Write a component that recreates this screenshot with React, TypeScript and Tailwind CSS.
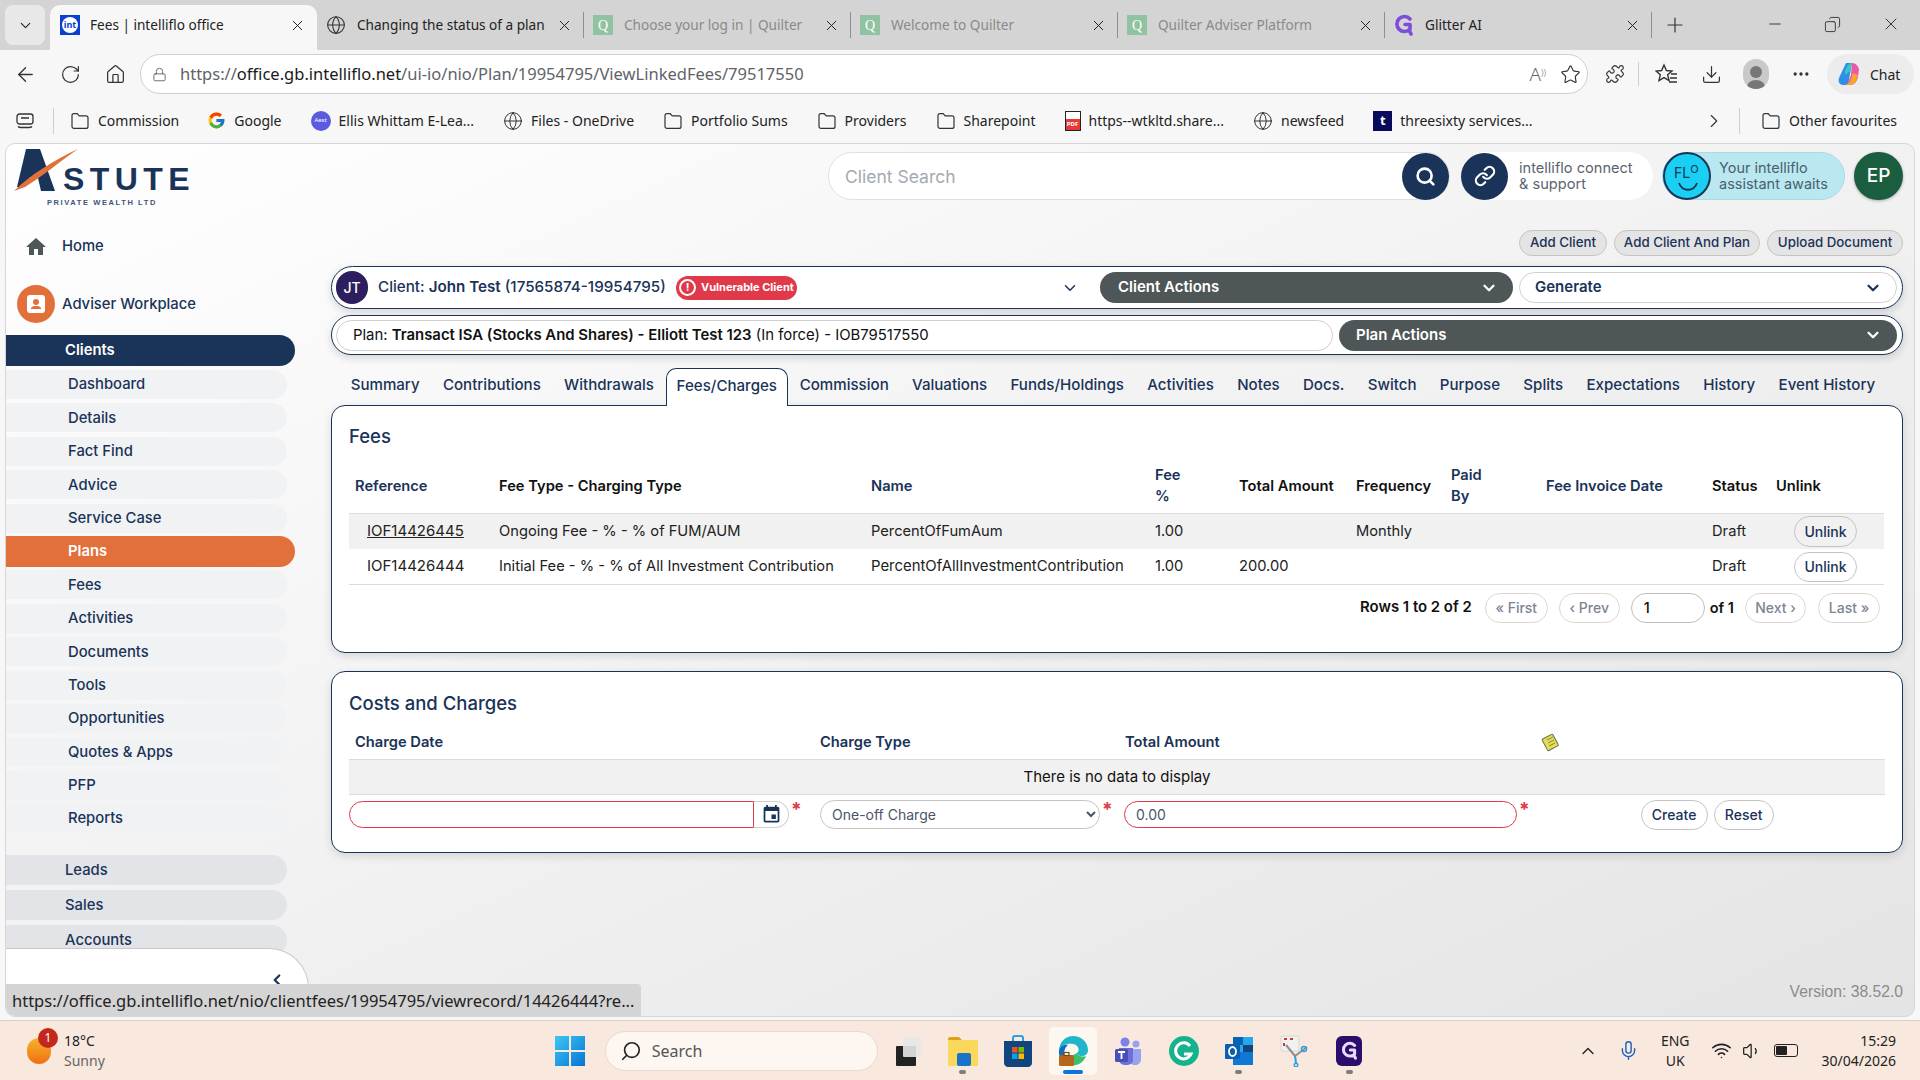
import {
  ArrowLeft,
  ChevronDown,
  ChevronLeft,
  ChevronRight,
  ChevronUp,
  Copy,
  Download,
  Globe,
  House,
  Link,
  Lock,
  Mic,
  Minus,
  MoreHorizontal,
  Plus,
  Puzzle,
  RotateCw,
  Search,
  Star,
  Volume1,
  Wifi,
  X,
} from "lucide-react";
import { FcGoogle } from "react-icons/fc";

const browserTabs = [
  { title: "Changing the status of a plan", icon: "globe", dim: false },
  { title: "Choose your log in | Quilter", icon: "q", dim: true },
  { title: "Welcome to Quilter", icon: "q", dim: true },
  { title: "Quilter Adviser Platform", icon: "q", dim: true },
  { title: "Glitter AI", icon: "g", dim: false },
];

const menuItems = [
  "Dashboard",
  "Details",
  "Fact Find",
  "Advice",
  "Service Case",
  "Plans",
  "Fees",
  "Activities",
  "Documents",
  "Tools",
  "Opportunities",
  "Quotes & Apps",
  "PFP",
  "Reports",
];

const planTabs = [
  "Summary",
  "Contributions",
  "Withdrawals",
  "Fees/Charges",
  "Commission",
  "Valuations",
  "Funds/Holdings",
  "Activities",
  "Notes",
  "Docs.",
  "Switch",
  "Purpose",
  "Splits",
  "Expectations",
  "History",
  "Event History",
];

function FolderIcon() {
  return (
    <svg width="20" height="20" viewBox="0 0 20 20" fill="none" stroke="#333" strokeWidth="1.2" className="shrink-0">
      <path d="M2 4.5C2 3.4 2.900 2.600 4 2.600h3.200l2 2.200H16c1.100 0 2 .9 2 2v8.600c0 1.100-.9 2-2 2H4c-1.100 0-2-.9-2-2z" />
    </svg>
  );
}

function QuilterIcon() {
  return (
    <span className="flex h-5 w-5 shrink-0 items-center justify-center bg-[#8fc3a2] [font-family:'Liberation_Serif',serif] text-[14px] text-white">
      Q
    </span>
  );
}

function GlitterG({ color, size }: { color: string; size: number }) {
  return (
    <svg width={size} height={size + 2} viewBox="0 0 20 22" className="shrink-0">
      <path
        d="M16 5A7.500 7.500 0 1 0 16 15V10.500H11M15 16l2 4"
        fill="none"
        stroke={color}
        strokeWidth="3.600"
        strokeLinecap="round"
        strokeLinejoin="round"
      />
    </svg>
  );
}

function BrowserTab({ title, icon, dim }: { title: string; icon: string; dim: boolean }) {
  return (
    <div className="flex h-[45px] w-[267px] shrink-0 items-center pb-[5px] pl-[9px]">
      {icon === "globe" && <Globe size={20} strokeWidth={1.3} className="shrink-0 text-[#333]" />}
      {icon === "q" && <QuilterIcon />}
      {icon === "g" && <GlitterG color="#7c4ddb" size={20} />}
      <span className={`ml-[11px] flex-1 truncate text-[13.600px] ${dim ? "text-[#8a8a8a]" : "text-[#222]"}`}>{title}</span>
      <X size={17} strokeWidth={1.4} className="mr-[10px] shrink-0 text-[#222]" />
      <span className="h-[26px] w-px shrink-0 bg-[#8f8f8f]" />
    </div>
  );
}

function TabStrip() {
  return (
    <div className="flex h-[50px] shrink-0 items-end bg-[#d4d4d4] pl-[5px]">
      <div className="mb-[5px] mr-[5px] flex h-[40px] w-[40px] items-center justify-center rounded-[8px] bg-[#e8e8e8]">
        <ChevronDown size={17} strokeWidth={1.5} className="text-[#222]" />
      </div>
      <div className="flex h-[45px] w-[267px] items-center rounded-t-[10px] bg-[#f7f7f7] pb-[5px] pl-[10px] pr-[11px]">
        <span className="flex h-[20px] w-[20px] shrink-0 items-center justify-center bg-[#0a3fd0]">
          <span className="flex h-[16px] w-[16px] items-center justify-center rounded-full bg-white text-[9px] font-bold text-[#0a3fd0]">int</span>
        </span>
        <span className="ml-[10px] flex-1 text-[13.600px] text-[#222]">Fees | intelliflo office</span>
        <X size={17} strokeWidth={1.4} className="text-[#222]" />
      </div>
      {browserTabs.map((t) => (
        <BrowserTab key={t.title} {...t} />
      ))}
      <Plus size={24} strokeWidth={1.2} className="mb-[13px] ml-[11px] text-[#333]" />
      <div className="mb-[16px] ml-auto flex w-[154px] items-center justify-between pr-[19px] text-[#333]">
        <Minus size={18} strokeWidth={1.3} />
        <Copy size={17} strokeWidth={1.3} className="-scale-x-100" />
        <X size={20} strokeWidth={1.2} />
      </div>
    </div>
  );
}

function ToolBar() {
  return (
    <div className="flex h-[48px] shrink-0 items-center bg-[#f7f7f7] pl-[14px] text-[#333]">
      <ArrowLeft size={23} strokeWidth={1.4} />
      <RotateCw size={21} strokeWidth={1.4} className="ml-[23px]" />
      <House size={21} strokeWidth={1.4} className="ml-[24px]" />
      <div className="ml-[14px] flex h-[40px] w-[1448px] items-center rounded-full border border-[#cfcfcf] bg-white pl-[11px] pr-[6px]">
        <Lock size={15} strokeWidth={1.5} className="text-[#666]" />
        <span className="ml-[13px] text-[16.500px] text-[#5f6368]">
          https://<span className="text-[#1a1a1a]">office.gb.intelliflo.net</span>/ui-io/nio/Plan/19954795/ViewLinkedFees/79517550
        </span>
        <span className="ml-auto text-[19px] font-light text-[#666]">
          A<sup className="text-[9px]">))</sup>
        </span>
        <Star size={21} strokeWidth={1.3} className="ml-[14px] text-[#333]" />
      </div>
      <Puzzle size={20} strokeWidth={1.4} className="ml-[17px]" />
      <span className="ml-[13px] h-[24px] w-px bg-[#cfcfcf]" />
      <svg width="24" height="22" viewBox="0 0 24 22" fill="none" stroke="#333" strokeWidth="1.4" className="ml-[16px]">
        <path d="M9 2l2.400 5.500 5.600.5-4.300 3.800 1.300 5.700L9 14.600l-5 2.900 1.300-5.700L1 8l5.600-.5z" />
        <path d="M16 11h6M15 15h7M14 19h8" />
      </svg>
      <Download size={21} strokeWidth={1.4} className="ml-[22px]" />
      <span className="ml-[21px] flex h-[30px] w-[26px] items-end justify-center overflow-hidden rounded-full bg-[#c9c9c9]">
        <svg width="22" height="26" viewBox="0 0 22 26" fill="#777">
          <circle cx="11" cy="9" r="6" />
          <ellipse cx="11" cy="24" rx="9" ry="7" />
        </svg>
      </span>
      <MoreHorizontal size={20} className="ml-[22px]" />
      <div className="ml-[16px] flex h-[40px] w-[87px] items-center rounded-full bg-[#ececec] pl-[10px]">
        <svg width="24" height="26" viewBox="0 0 24 26">
          <path d="M9 2h6l-4 22H6C2 24 1 20 2 17z" fill="#2f8fe8" />
          <path d="M15 2c4 0 6 3 7 6l-1 8c-1 5-4 8-8 8h-3l4-10z" fill="#e85aa8" />
          <path d="M6 24c4 0 7-2 8-6l2-6 5 2-2 6c-1 3-4 4-7 4z" fill="#f4a62a" />
          <path d="M8 10c1-3 3-8 7-8l-2 8-5 4z" fill="#35c7c0" />
        </svg>
        <span className="ml-[9px] text-[14px] text-[#222]">Chat</span>
      </div>
    </div>
  );
}

function Bookmark({ icon, label }: { icon: React.ReactNode; label: string }) {
  return (
    <div className="flex shrink-0 items-center gap-[8px]">
      {icon}
      <span className="text-[14px] text-[#222]">{label}</span>
    </div>
  );
}

function BookmarkBar() {
  const globe = <Globe size={20} strokeWidth={1.2} className="text-[#333]" />;
  return (
    <div className="flex h-[45px] shrink-0 items-center bg-[#f7f7f7] pl-[16px] pr-[23px]">
      <svg width="18" height="18" viewBox="0 0 18 18" fill="none" stroke="#333" strokeWidth="1.3">
        <rect x="1" y="2" width="16" height="10" rx="2.500" />
        <path d="M5 6h8M2 14.500c1 1 2 1 3 1h8c1 0 2 0 3-1" />
      </svg>
      <span className="ml-[19px] mr-[16px] h-[26px] w-px bg-[#cfcfcf]" />
      <div className="flex flex-1 items-center gap-[29px]">
        <Bookmark icon={<FolderIcon />} label="Commission" />
        <div className="-ml-[1px]">
          <Bookmark icon={<FcGoogle size={19} />} label="Google" />
        </div>
        <Bookmark
          icon={
            <span className="flex h-[20px] w-[20px] items-center justify-center rounded-full bg-[#5b5be0] text-[6px] text-white">
              Aest
            </span>
          }
          label="Ellis Whittam E-Lea..."
        />
        <Bookmark icon={globe} label="Files - OneDrive" />
        <Bookmark icon={<FolderIcon />} label="Portfolio Sums" />
        <Bookmark icon={<FolderIcon />} label="Providers" />
        <Bookmark icon={<FolderIcon />} label="Sharepoint" />
        <Bookmark
          icon={
            <span className="flex h-[20px] w-[16px] items-end border border-[#222] bg-white">
              <span className="w-full bg-[#e53935] text-center text-[6px] font-bold leading-[11px] text-white">PDF</span>
            </span>
          }
          label="https--wtkltd.share..."
        />
        <Bookmark icon={globe} label="newsfeed" />
        <Bookmark
          icon={
            <span className="flex h-[20px] w-[19px] items-center justify-center bg-[#0a0a5c] text-[13px] font-bold text-white">t</span>
          }
          label="threesixty services..."
        />
      </div>
      <ChevronRight size={22} strokeWidth={1.2} className="text-[#333]" />
      <span className="ml-[14px] mr-[21px] h-[26px] w-px bg-[#cfcfcf]" />
      <Bookmark icon={<FolderIcon />} label="Other favourites" />
    </div>
  );
}

function AstuteLogo() {
  return (
    <div className="relative h-[62px] w-[190px]">
      <svg width="66" height="46" viewBox="0 0 66 46" className="absolute left-[2px] top-[1px]">
        <path d="M12 0h14l15 42H27L24 29l-8-1-5 10H3z" fill="#1a3358" />
        <path d="M0 42C16 26 40 11 64 0 44 14 26 29 11 38z" fill="#e2703a" />
      </svg>
      <span className="absolute left-[51px] top-[16px] text-[32px] font-bold leading-[30px] tracking-[5.400px] text-[#1a3358] [font-family:'Liberation_Sans',sans-serif]">
        STUTE
      </span>
      <span className="absolute left-[35px] top-[50px] whitespace-nowrap text-[7.500px] font-bold leading-[10px] tracking-[1.600px] text-[#3d5578] [font-family:'Liberation_Sans',sans-serif]">
        PRIVATE WEALTH LTD
      </span>
    </div>
  );
}

function Sidebar() {
  return (
    <aside className="relative flex w-[325px] shrink-0 flex-col overflow-hidden text-[14.800px] font-medium text-[#1a3358]">
      <div className="h-[84px] pl-[6px] pt-[4px]">
        <AstuteLogo />
      </div>
      <div className="flex h-[37px] items-center pl-[18px]">
        <svg width="24" height="24" viewBox="0 0 24 24" fill="#4f5658">
          <path d="M10 20v-6h4v6h5v-8h3L12 3 2 12h3v8z" />
        </svg>
        <span className="ml-[14px]">Home</span>
      </div>
      <div className="mt-[20px] flex h-[38px] items-center pl-[11px]">
        <span className="flex h-[38px] w-[38px] items-center justify-center rounded-full bg-[#e2703a]">
          <svg width="20" height="20" viewBox="0 0 20 20">
            <rect x="1" y="1" width="18" height="18" rx="3" fill="#fff" />
            <circle cx="10" cy="8" r="3" fill="#e2703a" />
            <path d="M4.500 15c1-2.500 3-3 5.500-3s4.500.5 5.500 3z" fill="#e2703a" />
          </svg>
        </span>
        <span className="ml-[7px]">Adviser Workplace</span>
      </div>
      <div className="mt-[12px] flex h-[31px] w-[289px] items-center rounded-r-full bg-[#1a3358] pl-[59px] font-semibold text-white">
        Clients
      </div>
      <div className="mt-[4px] flex flex-col gap-[4.400px]">
        {menuItems.map((m) =>
          m === "Plans" ? (
            <div key={m} className="-my-[1px] flex h-[31px] w-[289px] items-center rounded-r-full bg-[#e2703a] pl-[62px] font-semibold text-white">
              {m}
            </div>
          ) : (
            <div key={m} className="flex h-[29px] w-[281px] items-center rounded-r-full bg-[#f1f2f4] pl-[62px]">
              {m}
            </div>
          ),
        )}
      </div>
      <div className="mt-[22px] flex flex-col gap-[5px]">
        {["Leads", "Sales", "Accounts"].map((m) => (
          <div key={m} className="flex h-[30px] w-[281px] items-center rounded-r-full bg-[#e2e4e8] pl-[59px]">
            {m}
          </div>
        ))}
      </div>
      {/* collapse panel sits over the end of the menu */}
      <div className="absolute bottom-0 left-0 h-[68px] w-[303px] rounded-tr-[40px] border-r border-t border-[#c9c9c9] bg-white">
        <ChevronLeft size={18} strokeWidth={3} className="absolute left-[262px] top-[22px] text-[#1a3358]" />
      </div>
    </aside>
  );
}

function PillButton({ children, className = "" }: { children: React.ReactNode; className?: string }) {
  return (
    <button className={`flex items-center justify-center rounded-full border border-[#c4c4c4] font-medium text-[#1a3358] ${className}`}>
      {children}
    </button>
  );
}

function TopBar() {
  return (
    <div className="flex h-[48px] justify-end">
      <div className="flex w-[622px] items-center rounded-full border border-[#e0e0e0] bg-white pl-[16px]">
        <input
          placeholder="Client Search"
          className="mt-[2px] min-w-0 flex-1 bg-transparent text-[17.500px] outline-none placeholder:text-[#a3a9b3]"
        />
        <span className="ml-[1px] flex h-[47px] w-[47px] shrink-0 items-center justify-center rounded-full bg-[#1a3358]">
          <Search size={21} strokeWidth={3} className="text-white" />
        </span>
      </div>
      <div className="ml-[11px] flex w-[192px] items-center rounded-full bg-white">
        <span className="flex h-[47px] w-[47px] shrink-0 items-center justify-center rounded-full bg-[#1a3358]">
          <Link size={22} strokeWidth={2.4} className="text-white" />
        </span>
        <span className="ml-[11px] text-[14.600px] leading-[16px] text-[#5b6470]">
          intelliflo connect
          <br />& support
        </span>
      </div>
      <div className="ml-[9px] flex w-[183px] items-center rounded-full border border-[#a9dbe4] bg-[#b9e8f1]">
        <span className="relative h-[48px] w-[48px] shrink-0 rounded-full border-2 border-[#1a3358] bg-[#19d0f2] text-[#1a3358]">
          <span className="absolute left-[9px] top-[11px] text-[14px] leading-[16px]">
            FL<sup className="text-[11px]">O</sup>
          </span>
          <svg width="22" height="10" viewBox="0 0 22 10" className="absolute left-[12px] top-[28px]" fill="none" stroke="#1a3358" strokeWidth="1.8">
            <path d="M2 1c3 9 15 9 18 0" />
          </svg>
        </span>
        <span className="ml-[8px] text-[14.500px] leading-[16px] text-[#4a6170]">
          Your intelliflo
          <br />
          assistant awaits
        </span>
      </div>
      <span className="ml-[9px] flex h-[48px] w-[49px] items-center justify-center rounded-full bg-[#1b5e3f] text-[19px] font-medium text-white shadow-[0_1px_3px_rgba(0,0,0,0.3)]">
        EP
      </span>
    </div>
  );
}

function ClientBars() {
  return (
    <>
      <div className="mt-[9px] flex h-[43px] items-center rounded-[22px] border border-[#1a3358] bg-white pl-[4px] pr-[5px] shadow-[0_3px_8px_rgba(0,0,0,0.15)]">
        <span className="flex h-[33px] w-[32px] shrink-0 items-center justify-center rounded-full bg-[#2d1f5e] text-[14px] font-medium text-white">JT</span>
        <span className="ml-[10px] w-[288px] whitespace-nowrap text-[15.200px] font-medium text-[#1a3358]">
          Client: <span className="font-semibold">John Test</span> (17565874-19954795)
        </span>
        <span className="ml-[10px] flex h-[24px] w-[121px] shrink-0 items-center rounded-full bg-[#e0394a] pl-[3px] text-[11px] font-bold text-white">
          <span className="flex h-[17px] w-[17px] items-center justify-center rounded-full border-2 border-white text-[11px] leading-none">!</span>
          <span className="ml-[5px]">Vulnerable Client</span>
        </span>
        <span className="flex flex-1 justify-end pr-[21px]">
          <ChevronDown size={18} strokeWidth={2} className="text-[#1a3358]" />
        </span>
        <div className="flex h-[31px] w-[413px] shrink-0 items-center justify-between rounded-full bg-[#4f5658] pl-[18px] pr-[15px] text-[15px] font-semibold text-white">
          Client Actions
          <ChevronDown size={18} strokeWidth={3} />
        </div>
        <div className="ml-[6px] flex h-[31px] w-[378px] shrink-0 items-center justify-between rounded-full border border-[#cfcfcf] bg-white pl-[15px] pr-[14px] text-[15px] font-semibold text-[#1a3358]">
          Generate
          <ChevronDown size={18} strokeWidth={3} />
        </div>
      </div>
      <div className="mt-[6px] flex h-[40px] items-center rounded-[20px] border border-[#1a3358] bg-white pl-[4px] pr-[5px] shadow-[0_3px_8px_rgba(0,0,0,0.15)]">
        <div className="flex h-[31px] w-[997px] items-center rounded-full border border-[#cfcfcf] pl-[16px] text-[14.900px] text-[#111]">
          Plan:&nbsp;<span className="font-semibold">Transact ISA (Stocks And Shares) - Elliott Test 123</span>&nbsp;(In force) - IOB79517550
        </div>
        <div className="ml-[6px] flex h-[31px] flex-1 items-center justify-between rounded-full bg-[#4f5658] pl-[17px] pr-[15px] text-[15px] font-semibold text-white">
          Plan Actions
          <ChevronDown size={18} strokeWidth={3} />
        </div>
      </div>
    </>
  );
}

function PlanTabs() {
  return (
    <div className="relative z-10 mt-[13px] -mb-px flex h-[38px] pl-[8px] text-[15.100px] font-medium text-[#1a3358]">
      {planTabs.map((t) =>
        t === "Fees/Charges" ? (
          <span key={t} className="flex items-center rounded-t-[10px] border border-b-0 border-[#1a3358] bg-white px-[10px] pb-[3px]">
            {t}
          </span>
        ) : (
          <span key={t} className="flex items-center px-[11.650px] pb-[3px]">
            {t}
          </span>
        ),
      )}
    </div>
  );
}

function FeesCard() {
  const th = "px-[6px] pt-[1px] text-left align-middle text-[14.700px] font-semibold";
  const td = "px-[6px] align-middle text-[14.700px] text-[#222]";
  const pager = "flex h-[30px] items-center justify-center rounded-full border border-[#d8d8d8] text-[14px] font-medium text-[#7b8494]";
  return (
    <div className="h-[248px] rounded-[14px] border border-[#1a3358] bg-white px-[17px] pt-[19px] shadow-[0_3px_10px_rgba(0,0,0,0.12)]">
      <h2 className="mb-[12px] text-[18.500px] font-medium leading-[22px] text-[#1a3358]">Fees</h2>
      <table className="w-[1535px] table-fixed border-collapse">
        <colgroup>
          <col className="w-[144px]" />
          <col className="w-[372px]" />
          <col className="w-[285px]" />
          <col className="w-[83px]" />
          <col className="w-[117px]" />
          <col className="w-[95px]" />
          <col className="w-[95px]" />
          <col className="w-[166px]" />
          <col className="w-[64px]" />
          <col className="w-[114px]" />
        </colgroup>
        <thead>
          <tr className="h-[54px] leading-[21px]">
            <th className={`${th} text-[#1a3358]`}>Reference</th>
            <th className={`${th} text-[#111]`}>Fee Type - Charging Type</th>
            <th className={`${th} text-[#1a3358]`}>Name</th>
            <th className={`${th} pl-[5px] font-medium text-[#1a3358]`}>
              Fee
              <br />%
            </th>
            <th className={`${th} text-[#111]`}>Total Amount</th>
            <th className={`${th} text-[#111]`}>Frequency</th>
            <th className={`${th} text-[#1a3358]`}>
              Paid
              <br />
              By
            </th>
            <th className={`${th} text-[#1a3358]`}>Fee Invoice Date</th>
            <th className={`${th} text-[#111]`}>Status</th>
            <th className={`${th} text-[#111]`}>Unlink</th>
          </tr>
        </thead>
        <tbody>
          <tr className="h-[36px] border-t border-[#dcdcdc] bg-[#f1f1f1]">
            <td className={`${td} pl-[18px] text-[#1a3358] underline`}>
              <span className="text-[15px]">IOF14426445</span>
            </td>
            <td className={td}>Ongoing Fee - % - % of FUM/AUM</td>
            <td className={td}>PercentOfFumAum</td>
            <td className={`${td} pl-[5px]`}>1.00</td>
            <td className={td}></td>
            <td className={td}>Monthly</td>
            <td className={td}></td>
            <td className={td}></td>
            <td className={td}>Draft</td>
            <td className={`${td} pl-[24px]`}>
              <PillButton className="mt-[1px] h-[31px] w-[63px] bg-[#f1f1f1] text-[14px]">Unlink</PillButton>
            </td>
          </tr>
          <tr className="h-[35px] border-b border-[#dcdcdc]">
            <td className={`${td} pl-[18px] text-[#1a3358]`}>
              <span className="text-[15px]">IOF14426444</span>
            </td>
            <td className={td}>Initial Fee - % - % of All Investment Contribution</td>
            <td className={td}>
              <span className="text-[14.900px]">PercentOfAllInvestmentContribution</span>
            </td>
            <td className={`${td} pl-[5px]`}>1.00</td>
            <td className={td}>200.00</td>
            <td className={td}></td>
            <td className={td}></td>
            <td className={td}></td>
            <td className={td}>Draft</td>
            <td className={`${td} pl-[24px]`}>
              <PillButton className="mt-[1px] h-[30px] w-[63px] bg-white text-[14px]">Unlink</PillButton>
            </td>
          </tr>
        </tbody>
      </table>
      <div className="mt-[8px] flex w-[1531px] items-center justify-end">
        <span className="mr-[13px] text-[14.900px] font-semibold text-[#111]">Rows 1 to 2 of 2</span>
        <span className={`${pager} w-[63px]`}>« First</span>
        <span className={`${pager} ml-[11px] w-[61px]`}>‹ Prev</span>
        <input
          defaultValue="1"
          className="ml-[11px] h-[30px] w-[74px] rounded-full border border-[#bdbdbd] pl-[12px] text-[14.500px] font-medium text-[#111] outline-none"
        />
        <span className="ml-[5px] text-[14.500px] font-semibold text-[#111]">of 1</span>
        <span className={`${pager} ml-[11px] w-[61px]`}>Next ›</span>
        <span className={`${pager} ml-[12px] w-[62px]`}>Last »</span>
      </div>
    </div>
  );
}

function Asterisk() {
  return <span className="-mt-[10px] ml-[2px] text-[19px] font-bold leading-none text-[#e0394a]">*</span>;
}

function CostsCard() {
  const grid = "grid grid-cols-[471px_304px_416px_1fr]";
  return (
    <div className="mt-[18px] h-[182px] rounded-[14px] border border-[#1a3358] bg-white px-[17px] pt-[20px] shadow-[0_3px_10px_rgba(0,0,0,0.12)]">
      <h2 className="text-[18.500px] font-medium leading-[22px] text-[#1a3358]">Costs and Charges</h2>
      <div className={`${grid} mt-[11px] h-[34px] items-center text-[14.700px] font-semibold text-[#1a3358]`}>
        <span className="pl-[6px]">Charge Date</span>
        <span>Charge Type</span>
        <span className="pl-[1px]">Total Amount</span>
        <svg width="20" height="20" viewBox="0 0 20 20">
          <rect x="4" y="4" width="12" height="13" rx="1" fill="#e3df55" stroke="#6b6b4a" transform="rotate(-28 10 10)" />
          <path d="M7 8l6-3M8 11l6-3M9 14l6-3" stroke="#6b6b4a" strokeWidth="0.8" />
        </svg>
      </div>
      <div className="flex h-[36px] items-center justify-center border-y border-[#dcdcdc] bg-[#f1f1f1] text-[15px] text-[#111]">
        There is no data to display
      </div>
      <div className={`${grid} mt-[3px] h-[33px] items-center`}>
        <div className="flex items-center">
          <input className="h-[27px] w-[405px] rounded-l-full border border-[#e0394a] outline-none" />
          <span className="flex h-[27px] w-[35px] items-center justify-center rounded-r-full border border-l-0 border-[#cfcfcf]">
            <svg width="21" height="21" viewBox="0 0 24 24" fill="#1a3358">
              <path d="M17 12h-5v5h5v-5zM16 1v2H8V1H6v2H5c-1.110 0-1.990.9-1.990 2L3 19c0 1.100.890 2 2 2h14c1.100 0 2-.9 2-2V5c0-1.100-.9-2-2-2h-1V1h-2zm3 18H5V8h14v11z" />
            </svg>
          </span>
          <Asterisk />
        </div>
        <div className="flex items-center">
          <select
            defaultValue="One-off Charge"
            className="h-[29px] w-[280px] rounded-full border border-[#c4c4c4] bg-white pl-[7px] text-[14px] text-[#4a5568] outline-none"
          >
            <option>One-off Charge</option>
          </select>
          <Asterisk />
        </div>
        <div className="col-span-2 flex items-center">
          <input
            defaultValue="0.00"
            className="h-[27px] w-[393px] rounded-full border border-[#e0394a] pl-[11px] text-[14px] text-[#4a5568] outline-none"
          />
          <Asterisk />
          <PillButton className="ml-[111px] h-[30px] w-[67px] bg-white text-[14px]">Create</PillButton>
          <PillButton className="ml-[6px] h-[30px] w-[60px] bg-white text-[14px]">Reset</PillButton>
        </div>
      </div>
    </div>
  );
}

function MainContent() {
  return (
    <main className="flex min-w-0 flex-1 flex-col pr-[11px] pt-[8px]">
      <TopBar />
      <div className="mt-[30px] flex justify-end gap-[7px]">
        <PillButton className="h-[26px] w-[88px] bg-[#e4e4e4] text-[13.300px]">Add Client</PillButton>
        <PillButton className="h-[26px] w-[146px] bg-[#e4e4e4] text-[13.300px]">Add Client And Plan</PillButton>
        <PillButton className="h-[26px] w-[136px] bg-[#e4e4e4] text-[13.300px]">Upload Document</PillButton>
      </div>
      <div className="h-px" />
      <ClientBars />
      <PlanTabs />
      <FeesCard />
      <CostsCard />
      <div className="mt-auto pb-[12px] text-right text-[15.700px] text-[#8b8b8b] [font-family:'Liberation_Sans',sans-serif]">
        Version: 38.52.0
      </div>
    </main>
  );
}

function TaskIcon({ children, dot, active }: { children: React.ReactNode; dot?: boolean; active?: boolean }) {
  return (
    <div className={`relative flex h-[48px] w-[48px] items-center justify-center rounded-[5px] ${active ? "bg-[#fdf7f2]" : ""}`}>
      {children}
      {dot && <span className="absolute bottom-[1px] h-[4px] w-[7px] rounded-full bg-[#7d7d7d]" />}
      {active && <span className="absolute bottom-[1px] h-[4px] w-[20px] rounded-full bg-[#0a74d8]" />}
    </div>
  );
}

function Taskbar() {
  return (
    <div className="relative flex h-[60px] shrink-0 items-center border-t border-[#d8d0ca] bg-[#f8e8de] text-[#222]">
      <div className="relative ml-[27px] h-[26px] w-[24px] rounded-full bg-gradient-to-b from-[#f5b32c] to-[#ee6f12]">
        <span className="absolute -top-[10px] left-[11px] flex h-[20px] w-[20px] items-center justify-center rounded-full bg-[#c4281c] text-[12px] text-white">1</span>
      </div>
      <div className="ml-[13px] text-[14px] leading-[20px]">
        <div>18°C</div>
        <div className="text-[#666]">Sunny</div>
      </div>
      <svg width="30" height="30" viewBox="0 0 30 30" className="ml-[450px]">
        <defs>
          <linearGradient id="win" x1="0" y1="0" x2="1" y2="1">
            <stop offset="0" stopColor="#3cc8f5" />
            <stop offset="1" stopColor="#0673d4" />
          </linearGradient>
        </defs>
        <path d="M0 0h14v14H0zM16 0h14v14H16zM0 16h14v14H0zM16 16h14v14H16z" fill="url(#win)" />
      </svg>
      <div className="ml-[20px] flex h-[40px] w-[273px] items-center rounded-full border border-[#ead9cd] bg-[#fdf6f1] pl-[14px]">
        <Search size={22} strokeWidth={1.8} className="-scale-x-100 text-[#222]" />
        <span className="ml-[10px] text-[16px] text-[#555]">Search</span>
      </div>
      <div className="ml-[6px] flex items-center gap-[7.200px]">
        <TaskIcon>
          <svg width="26" height="30" viewBox="0 0 26 30">
            <rect x="1" y="10" width="20" height="20" rx="1" fill="#222" />
            <rect x="8" y="1" width="18" height="20" rx="1" fill="#e8e8e8" opacity="0.9" />
          </svg>
        </TaskIcon>
        <TaskIcon dot>
          <svg width="32" height="30" viewBox="0 0 32 30">
            <path d="M1 3c0-1 1-2 2-2h9l3 3h-14z" fill="#dca21a" />
            <rect x="1" y="4" width="30" height="26" fill="#fbd75b" />
            <rect x="10" y="17" width="14" height="13" rx="2" fill="#1a73c8" />
          </svg>
        </TaskIcon>
        <TaskIcon>
          <svg width="30" height="32" viewBox="0 0 30 32">
            <path d="M10 6V3c0-1 1-2 2-2h6c1 0 2 1 2 2v3" fill="none" stroke="#2aa0e0" strokeWidth="2" />
            <path d="M1 6h28v22c0 2-2 4-4 4H5c-2 0-4-2-4-4z" fill="#10457d" />
            <rect x="9" y="12" width="5.500" height="5.500" fill="#f25022" />
            <rect x="15.500" y="12" width="5.500" height="5.500" fill="#7fba00" />
            <rect x="9" y="18.500" width="5.500" height="5.500" fill="#00a4ef" />
            <rect x="15.500" y="18.500" width="5.500" height="5.500" fill="#ffb900" />
          </svg>
        </TaskIcon>
        <TaskIcon active>
          <svg width="32" height="32" viewBox="0 0 32 32">
            <path d="M2 15C3 6 9 1 16 1c8 0 15 6 15 14 0 4-3 6-6 6-4 0-5-2-5-3 3-2 2-8-4-9C9 8 4 11 2 15z" fill="#1fb6c9" />
            <path d="M2 15c1-3 5-6 9-5-4 3-5 9-2 14l4 5C6 29 1 23 2 15z" fill="#0c6fc4" />
            <path d="M20 18c1 4 6 4 9 3-2 6-8 10-14 9-3-4-1-10 5-12z" fill="#39c06f" />
            <rect x="2" y="20" width="15" height="11" rx="1.500" fill="#b4671b" />
            <rect x="7" y="17.500" width="5" height="3" fill="none" stroke="#7c4510" strokeWidth="1.200" />
          </svg>
        </TaskIcon>
        <TaskIcon>
          <svg width="30" height="30" viewBox="0 0 30 30">
            <circle cx="11" cy="6" r="4.500" fill="#7b83eb" />
            <circle cx="22" cy="8" r="3.500" fill="#9aa1f0" />
            <path d="M15 13h12v10c0 4-3 6-6 6s-6-2-6-6z" fill="#9aa1f0" />
            <path d="M5 12h14v12c0 3-3 5-7 5s-7-2-7-5z" fill="#6a70d9" />
            <rect x="1" y="13" width="13" height="13" rx="1.500" fill="#4a4fb8" />
            <path d="M4 16h7M7.500 16v7" stroke="#fff" strokeWidth="1.800" />
          </svg>
        </TaskIcon>
        <TaskIcon>
          <svg width="30" height="30" viewBox="0 0 30 30">
            <circle cx="15" cy="15" r="15" fill="#15b28d" />
            <path d="M21 10a8 8 0 1 0 1 8h-7" fill="none" stroke="#fff" strokeWidth="3" />
          </svg>
        </TaskIcon>
        <TaskIcon dot>
          <svg width="30" height="30" viewBox="0 0 30 30">
            <path d="M9 1h20v26H9z" fill="#28a8ea" />
            <path d="M9 1h10v8H9z" fill="#0364b8" />
            <path d="M19 9h10v8H19z" fill="#14447d" />
            <path d="M9 16l20 0v13H9z" fill="#0f78d4" />
            <rect x="1" y="8" width="15" height="15" rx="1" fill="#0a5fb0" />
            <ellipse cx="8.500" cy="15.500" rx="3.500" ry="4.500" fill="none" stroke="#fff" strokeWidth="1.800" />
          </svg>
        </TaskIcon>
        <TaskIcon>
          <svg width="30" height="32" viewBox="0 0 30 32">
            <rect x="2" y="1" width="18" height="15" rx="1" fill="#f1f1f1" stroke="#d7d7d7" />
            <path d="M5 4h3M11 4h3M5 8v3" stroke="#d23b2b" strokeWidth="2" />
            <path d="M7 10l9 11M28 12l-12 9" stroke="#8e8e8e" strokeWidth="2" />
            <circle cx="25" cy="14" r="2.500" fill="none" stroke="#2aa0e0" strokeWidth="1.500" />
            <path d="M16 21l1 7" stroke="#2aa0e0" strokeWidth="2" />
            <circle cx="17" cy="30" r="1.800" fill="none" stroke="#2aa0e0" strokeWidth="1.400" />
          </svg>
        </TaskIcon>
        <TaskIcon dot>
          <span className="flex h-[30px] w-[26px] items-center justify-center rounded-[6px] bg-[#2c0d6b]">
            <GlitterG color="#e7dcff" size={17} />
          </span>
        </TaskIcon>
      </div>
      <div className="ml-auto flex items-center pr-[24px]">
        <ChevronUp size={20} strokeWidth={1.6} />
        <Mic size={21} strokeWidth={1.6} className="ml-[20px] text-[#1d5fc0]" />
        <div className="ml-[22px] text-center text-[14px] leading-[20px]">
          ENG
          <br />
          UK
        </div>
        <Wifi size={21} strokeWidth={1.8} className="ml-[21px]" />
        <Volume1 size={20} strokeWidth={1.5} className="ml-[10px]" />
        <span className="relative ml-[12px] flex h-[13px] w-[24px] items-center rounded-[3px] border border-[#222] p-[1px]">
          <span className="h-full w-[11px] rounded-[1px] bg-[#222]" />
        </span>
        <div className="ml-[24px] text-right text-[14px] leading-[20px]">
          15:29
          <br />
          30/04/2026
        </div>
      </div>
    </div>
  );
}

export default function App() {
  return (
    <div className="flex h-[1080px] w-[1920px] flex-col overflow-hidden bg-[#f7f7f7] [font-family:'Noto_Sans',sans-serif]">
      <TabStrip />
      <ToolBar />
      <BookmarkBar />
      {/* page area */}
      <div className="relative ml-[5px] mr-[5px] flex h-[874px] shrink-0 overflow-hidden rounded-t-[10px] rounded-b-[10px] border border-[#d6d6d6] bg-gradient-to-br from-white to-[#e4e4e4] [font-family:Inter,sans-serif]">
        <Sidebar />
        <MainContent />
        {/* status bubble on hover */}
        <div className="absolute bottom-0 left-0 flex h-[32px] w-[635px] items-center rounded-tr-[4px] bg-[#d4d4d4] pl-[6px] pt-[2px] text-[16.500px] text-[#222] [font-family:'Noto_Sans',sans-serif]">
          https://office.gb.intelliflo.net/nio/clientfees/19954795/viewrecord/14426444?re...
        </div>
      </div>
      <div className="h-[3px] shrink-0" />
      <Taskbar />
    </div>
  );
}
